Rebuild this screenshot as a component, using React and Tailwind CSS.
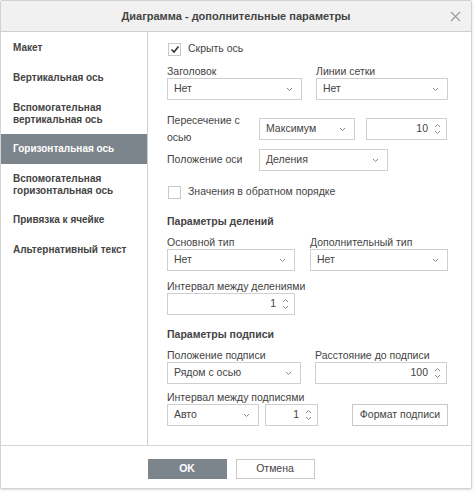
import React from 'react';

const font = { fontFamily: '"Liberation Sans", Arial, sans-serif' };

function Chevron() {
  return (
    <svg width="7" height="5" viewBox="0 0 7 5" className="shrink-0">
      <path d="M1 1l2.5 2.5L6 1" fill="none" stroke="#888" strokeWidth="1" />
    </svg>
  );
}

function Select({ value, w }) {
  return (
    <div className={`flex h-[22px] items-center justify-between border border-[#cfcfcf] bg-white pl-[6px] pr-[8px] ${w}`}>
      <span className="text-[10.5px] text-[#444]">{value}</span>
      <Chevron />
    </div>
  );
}

function Spin({ value, w }) {
  return (
    <div className={`flex h-[22px] items-center justify-end border border-[#cfcfcf] bg-white pr-[5px] ${w}`}>
      <span className="text-[10.5px] text-[#444]">{value}</span>
      <svg width="7" height="14" viewBox="0 0 7 14" className="ml-[6px] shrink-0">
        <path d="M1 5l2.5-2.5L6 5" fill="none" stroke="#888" strokeWidth="1" />
        <path d="M1 9l2.5 2.5L6 9" fill="none" stroke="#888" strokeWidth="1" />
      </svg>
    </div>
  );
}

function Check({ checked, label }) {
  return (
    <div className="flex h-[14px] items-center">
      <div className="ml-px flex h-[13px] w-[13px] items-center justify-center border border-[#c8c8c8] bg-white">
        {checked && (
          <svg width="10" height="9" viewBox="0 0 10 9">
            <path d="M1.5 4.5l2.5 2.5L8.5 1.5" fill="none" stroke="#333" strokeWidth="1.6" />
          </svg>
        )}
      </div>
      <span className="ml-[7px] text-[10.5px] text-[#444]">{label}</span>
    </div>
  );
}

function Label({ children }) {
  return <div className="h-[14px] text-[10.5px] leading-[14px] text-[#444]">{children}</div>;
}

const navItems = [
  ['Макет'],
  ['Вертикальная ось'],
  ['Вспомогательная', 'вертикальная ось'],
  ['Горизонтальная ось'],
  ['Вспомогательная', 'горизонтальная ось'],
  ['Привязка к ячейке'],
  ['Альтернативный текст'],
];

export default function App() {
  return (
    <div className="h-[491px] w-[474px] bg-white" style={font}>
      <div className="flex h-[489px] w-[472px] flex-col rounded-[2px] border border-[#d2d2d2] bg-white shadow-[0_1px_3px_rgba(0,0,0,0.15)]">
        {/* header */}
        <div className="relative flex h-[31px] shrink-0 items-center justify-center border-b border-[#cfcfcf] bg-[#f1f1f1]">
          <span className="text-[11px] font-bold text-[#444]">Диаграмма - дополнительные параметры</span>
          <svg width="11" height="11" viewBox="0 0 11 11" className="absolute right-[10px] top-[10px]">
            <path d="M1 1l9 9M10 1l-9 9" stroke="#999" strokeWidth="1.1" />
          </svg>
        </div>

        {/* body */}
        <div className="flex flex-1">
          <div className="w-[147px] shrink-0 border-r border-[#cfcfcf] pt-px">
            {navItems.map((lines, i) => (
              <div
                key={i}
                className={`pl-[12px] text-[10px] font-bold leading-[12px] ${
                  lines.length > 1 ? 'py-[8.5px]' : 'py-[9px]'
                } ${i === 3 ? 'bg-[#7d858c] text-white' : 'text-[#444]'}`}
              >
                {lines.map((l) => (
                  <div key={l}>{l}</div>
                ))}
              </div>
            ))}
          </div>

          <div className="flex-1 pl-[19px] pt-[10px]">
            <Check checked label="Скрыть ось" />

            <div className="mt-[8px] flex gap-[14px]">
              <div>
                <Label>Заголовок</Label>
                <Select value="Нет" w="w-[135px]" />
              </div>
              <div>
                <Label>Линии сетки</Label>
                <Select value="Нет" w="w-[132px]" />
              </div>
            </div>

            <div className="mt-[18px] flex h-[22px] items-center">
              <div className="-my-[6px] w-[92px] text-[10.5px] leading-[17px] text-[#444]">
                Пересечение с<br />осью
              </div>
              <Select value="Максимум" w="w-[96px]" />
              <Spin value="10" w="ml-[11px] w-[81px]" />
            </div>

            <div className="mt-[9px] flex items-center">
              <div className="w-[92px] text-[10.5px] text-[#444]">Положение оси</div>
              <Select value="Деления" w="w-[129px]" />
            </div>

            <div className="mt-[14px]">
              <Check label="Значения в обратном порядке" />
            </div>

            <div className="mt-[15px] h-[14px] text-[10.5px] font-bold leading-[14px] text-[#444]">
              Параметры делений
            </div>

            <div className="mt-[7px] flex gap-[15px]">
              <div>
                <Label>Основной тип</Label>
                <Select value="Нет" w="w-[128px]" />
              </div>
              <div>
                <Label>Дополнительный тип</Label>
                <Select value="Нет" w="w-[138px]" />
              </div>
            </div>

            <div className="mt-[8px]">
              <Label>Интервал между делениями</Label>
              <Spin value="1" w="w-[128px]" />
            </div>

            <div className="mt-[12px] h-[14px] text-[10.5px] font-bold leading-[14px] text-[#444]">
              Параметры подписи
            </div>

            <div className="mt-[7px] flex gap-[14px]">
              <div>
                <Label>Положение подписи</Label>
                <Select value="Рядом с осью" w="w-[134px]" />
              </div>
              <div>
                <Label>Расстояние до подписи</Label>
                <Spin value="100" w="w-[132px]" />
              </div>
            </div>

            <div className="mt-[6px]">
              <Label>Интервал между подписями</Label>
              <div className="flex items-center">
                <Select value="Авто" w="w-[92px]" />
                <Spin value="1" w="ml-[6px] w-[53px]" />
                <div className="ml-[34px] flex h-[22px] w-[96px] items-center justify-center border border-[#c8c8c8] bg-white text-[10.5px] text-[#444]">
                  Формат подписи
                </div>
              </div>
            </div>
          </div>
        </div>

        {/* footer */}
        <div className="flex h-[43px] shrink-0 justify-center gap-[9px] border-t border-[#d6d6d6] pt-[13px] pr-[10px]">
          <div className="flex h-[20px] w-[79px] items-center justify-center bg-[#7d858c] text-[10.5px] font-bold text-white">
            OK
          </div>
          <div className="flex h-[20px] w-[79px] items-center justify-center border border-[#c8c8c8] bg-white text-[10.5px] text-[#444]">
            Отмена
          </div>
        </div>
      </div>
    </div>
  );
}
